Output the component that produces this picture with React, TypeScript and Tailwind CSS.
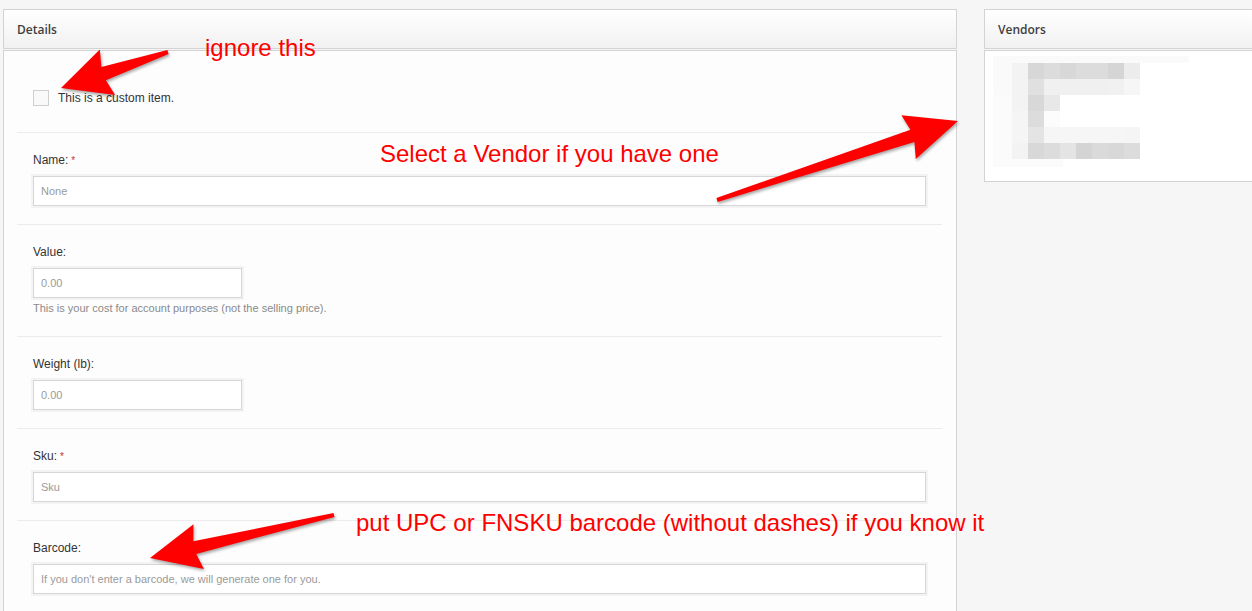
import React from "react";

type P = [number, number];

function arrowPoints(tail: P, tip: P, headLen: number, headW: number, tailW: number, baseW: number): string {
  const dx = tip[0] - tail[0];
  const dy = tip[1] - tail[1];
  const len = Math.hypot(dx, dy);
  const ux = dx / len;
  const uy = dy / len;
  const nx = -uy;
  const ny = ux;
  const bx = tip[0] - ux * headLen;
  const by = tip[1] - uy * headLen;
  const pts: P[] = [
    [tail[0] + (nx * tailW) / 2, tail[1] + (ny * tailW) / 2],
    [bx + (nx * baseW) / 2, by + (ny * baseW) / 2],
    [bx - ux * 4 + (nx * headW) / 2, by - uy * 4 + (ny * headW) / 2],
    tip,
    [bx - ux * 4 - (nx * headW) / 2, by - uy * 4 - (ny * headW) / 2],
    [bx - (nx * baseW) / 2, by - (ny * baseW) / 2],
    [tail[0] - (nx * tailW) / 2, tail[1] - (ny * tailW) / 2],
  ];
  return pts.map((p) => `${p[0].toFixed(1)},${p[1].toFixed(1)}`).join(" ");
}

const sans = { fontFamily: '"Liberation Sans", Arial, Helvetica, sans-serif' };

function Field({
  label,
  required,
  placeholder,
  narrow,
  help,
}: {
  label: string;
  required?: boolean;
  placeholder: string;
  narrow?: boolean;
  help?: string;
}) {
  return (
    <div className={`border-t border-[#ececec] px-4 pt-5 ${help ? "pb-[21px]" : "pb-[18px]"}`}>
      <div className="mb-[9px] h-[14px] text-[12px] leading-[14px] text-[#333]" style={sans}>
        {label}
        {required && <span className="ml-[3px] text-[10px] text-[#c9302c]">*</span>}
      </div>
      <div
        className={`flex h-[30px] items-center border border-[#d6d6d6] bg-white px-[7px] shadow-[0_0_0_2px_#f3f3f3] ${
          narrow ? "w-[209px]" : "w-full"
        }`}
      >
        <span className="text-[11px] text-[#9a9a9a]" style={sans}>
          {placeholder}
        </span>
      </div>
      {help && (
        <div className="mt-[4px] h-[13px] text-[11px] leading-[13px] text-[#8a8a8a]" style={sans}>
          {help}
        </div>
      )}
    </div>
  );
}

function Panel({ title, width, children }: { title: string; width: string; children: React.ReactNode }) {
  return (
    <div className={`flex shrink-0 flex-col ${width}`}>
      <div className="flex h-[40px] items-center border border-[#d3d3d3] bg-gradient-to-b from-white to-[#f1f1f1] px-[13px] pt-[2px]">
        <span
          className="text-[12px] font-semibold text-[#3f3f3f]"
          style={{ fontFamily: '"Open Sans", "Noto Sans", sans-serif' }}
        >
          {title}
        </span>
      </div>
      <div className="mt-[1px] border border-[#d3d3d3] bg-[#fdfdfd]">{children}</div>
    </div>
  );
}

const pix: string[][] = [
  ["#fafafa", "#f3f3f3", "#d7d7d7", "#dcdcdc", "#d8d8d8", "#dcdcdc", "#dcdcdc", "#d5d5d5", "#ececec"],
  ["#fafafa", "#f3f3f3", "#e0e0e0", "#f0f0f0", "#f0f0f0", "#f0f0f0", "#f0f0f0", "#f1f1f1", "#f6f6f6"],
  ["#fbfbfb", "#f3f3f3", "#d8d8d8", "#e8e8e8", "#fff", "#fff", "#fff", "#fff", "#fff"],
  ["#fbfbfb", "#f5f5f5", "#dcdcdc", "#fcfcfc", "#fff", "#fff", "#fff", "#fff", "#fff"],
  ["#fbfbfb", "#f5f5f5", "#e4e4e4", "#f6f6f6", "#f6f6f6", "#f6f6f6", "#f6f6f6", "#f6f6f6", "#f5f5f5"],
  ["#fbfbfb", "#f3f3f3", "#d8d8d8", "#dcdcdc", "#e4e4e4", "#d4d4d4", "#dadada", "#d8d8d8", "#dcdcdc"],
];

function Pixelated() {
  const colX = [0, 19, 35, 51, 67, 83, 99, 115, 131];
  const colW = [19, 16, 16, 16, 16, 16, 16, 16, 16];
  return (
    <svg width="200" height="118" viewBox="0 0 200 118" className="block">
      <rect x="0" y="0" width="196" height="7" fill="#fafafa" />
      {pix.map((row, r) =>
        row.map((c, i) => (
          <rect key={`${r}-${i}`} x={colX[i]} y={7 + r * 16} width={colW[i]} height={16} fill={c} />
        ))
      )}
      <rect x="0" y="103" width="70" height="8" fill="#fbfbfb" />
    </svg>
  );
}

export default function App() {
  const red = "#ff0000";
  return (
    <div className="relative h-[611px] w-[1252px] overflow-hidden bg-[#f6f6f6]">
      <div className="flex gap-[27px] pl-[3px] pt-[9px]">
        <Panel title="Details" width="w-[954px]">
          <div className="px-[13px] pb-0 pr-[14px]">
            <div className="flex h-[81px] items-start gap-[9px] px-4 pt-[39px]">
              <div className="h-[16px] w-[16px] border border-[#cfcfcf] bg-[#f9f9f9]" />
              <span className="text-[12px] leading-[16px] text-[#333]" style={sans}>
                This is a custom item.
              </span>
            </div>
            <Field label="Name:" required placeholder="None" />
            <Field
              label="Value:"
              placeholder="0.00"
              narrow
              help="This is your cost for account purposes (not the selling price)."
            />
            <Field label="Weight (lb):" placeholder="0.00" narrow />
            <Field label="Sku:" required placeholder="Sku" />
            <Field label="Barcode:" placeholder="If you don't enter a barcode, we will generate one for you." />
          </div>
        </Panel>
        <Panel title="Vendors" width="w-[290px]">
          <div className="h-[130px] bg-white pl-[8px] pt-[5px]">
            <Pixelated />
          </div>
        </Panel>
      </div>

      {/* annotations */}
      <div
        className="absolute left-[205px] top-[34px] text-[24px] leading-[28px]"
        style={{ ...sans, color: red }}
      >
        ignore this
      </div>
      <div
        className="absolute left-[380px] top-[140px] text-[24px] leading-[28px]"
        style={{ ...sans, color: red }}
      >
        Select a Vendor if you have one
      </div>
      <div
        className="absolute left-[356px] top-[509px] text-[24px] leading-[28px]"
        style={{ ...sans, color: red }}
      >
        put UPC or FNSKU barcode (without dashes) if you know it
      </div>
      <svg
        className="pointer-events-none absolute left-0 top-0"
        width="1252"
        height="611"
        viewBox="0 0 1252 611"
        style={{ filter: "drop-shadow(1px 2px 1.5px rgba(0,0,0,0.35))" }}
      >
        <polygon points={arrowPoints([168, 52], [61, 88], 45, 48, 4, 14)} fill="#ff0000" />
        <polygon points={arrowPoints([717, 200], [958, 121], 48, 46, 4, 13)} fill="#ff0000" />
        <polygon points={arrowPoints([334, 515], [150, 558], 46, 46, 4, 13)} fill="#ff0000" />
      </svg>
    </div>
  );
}
